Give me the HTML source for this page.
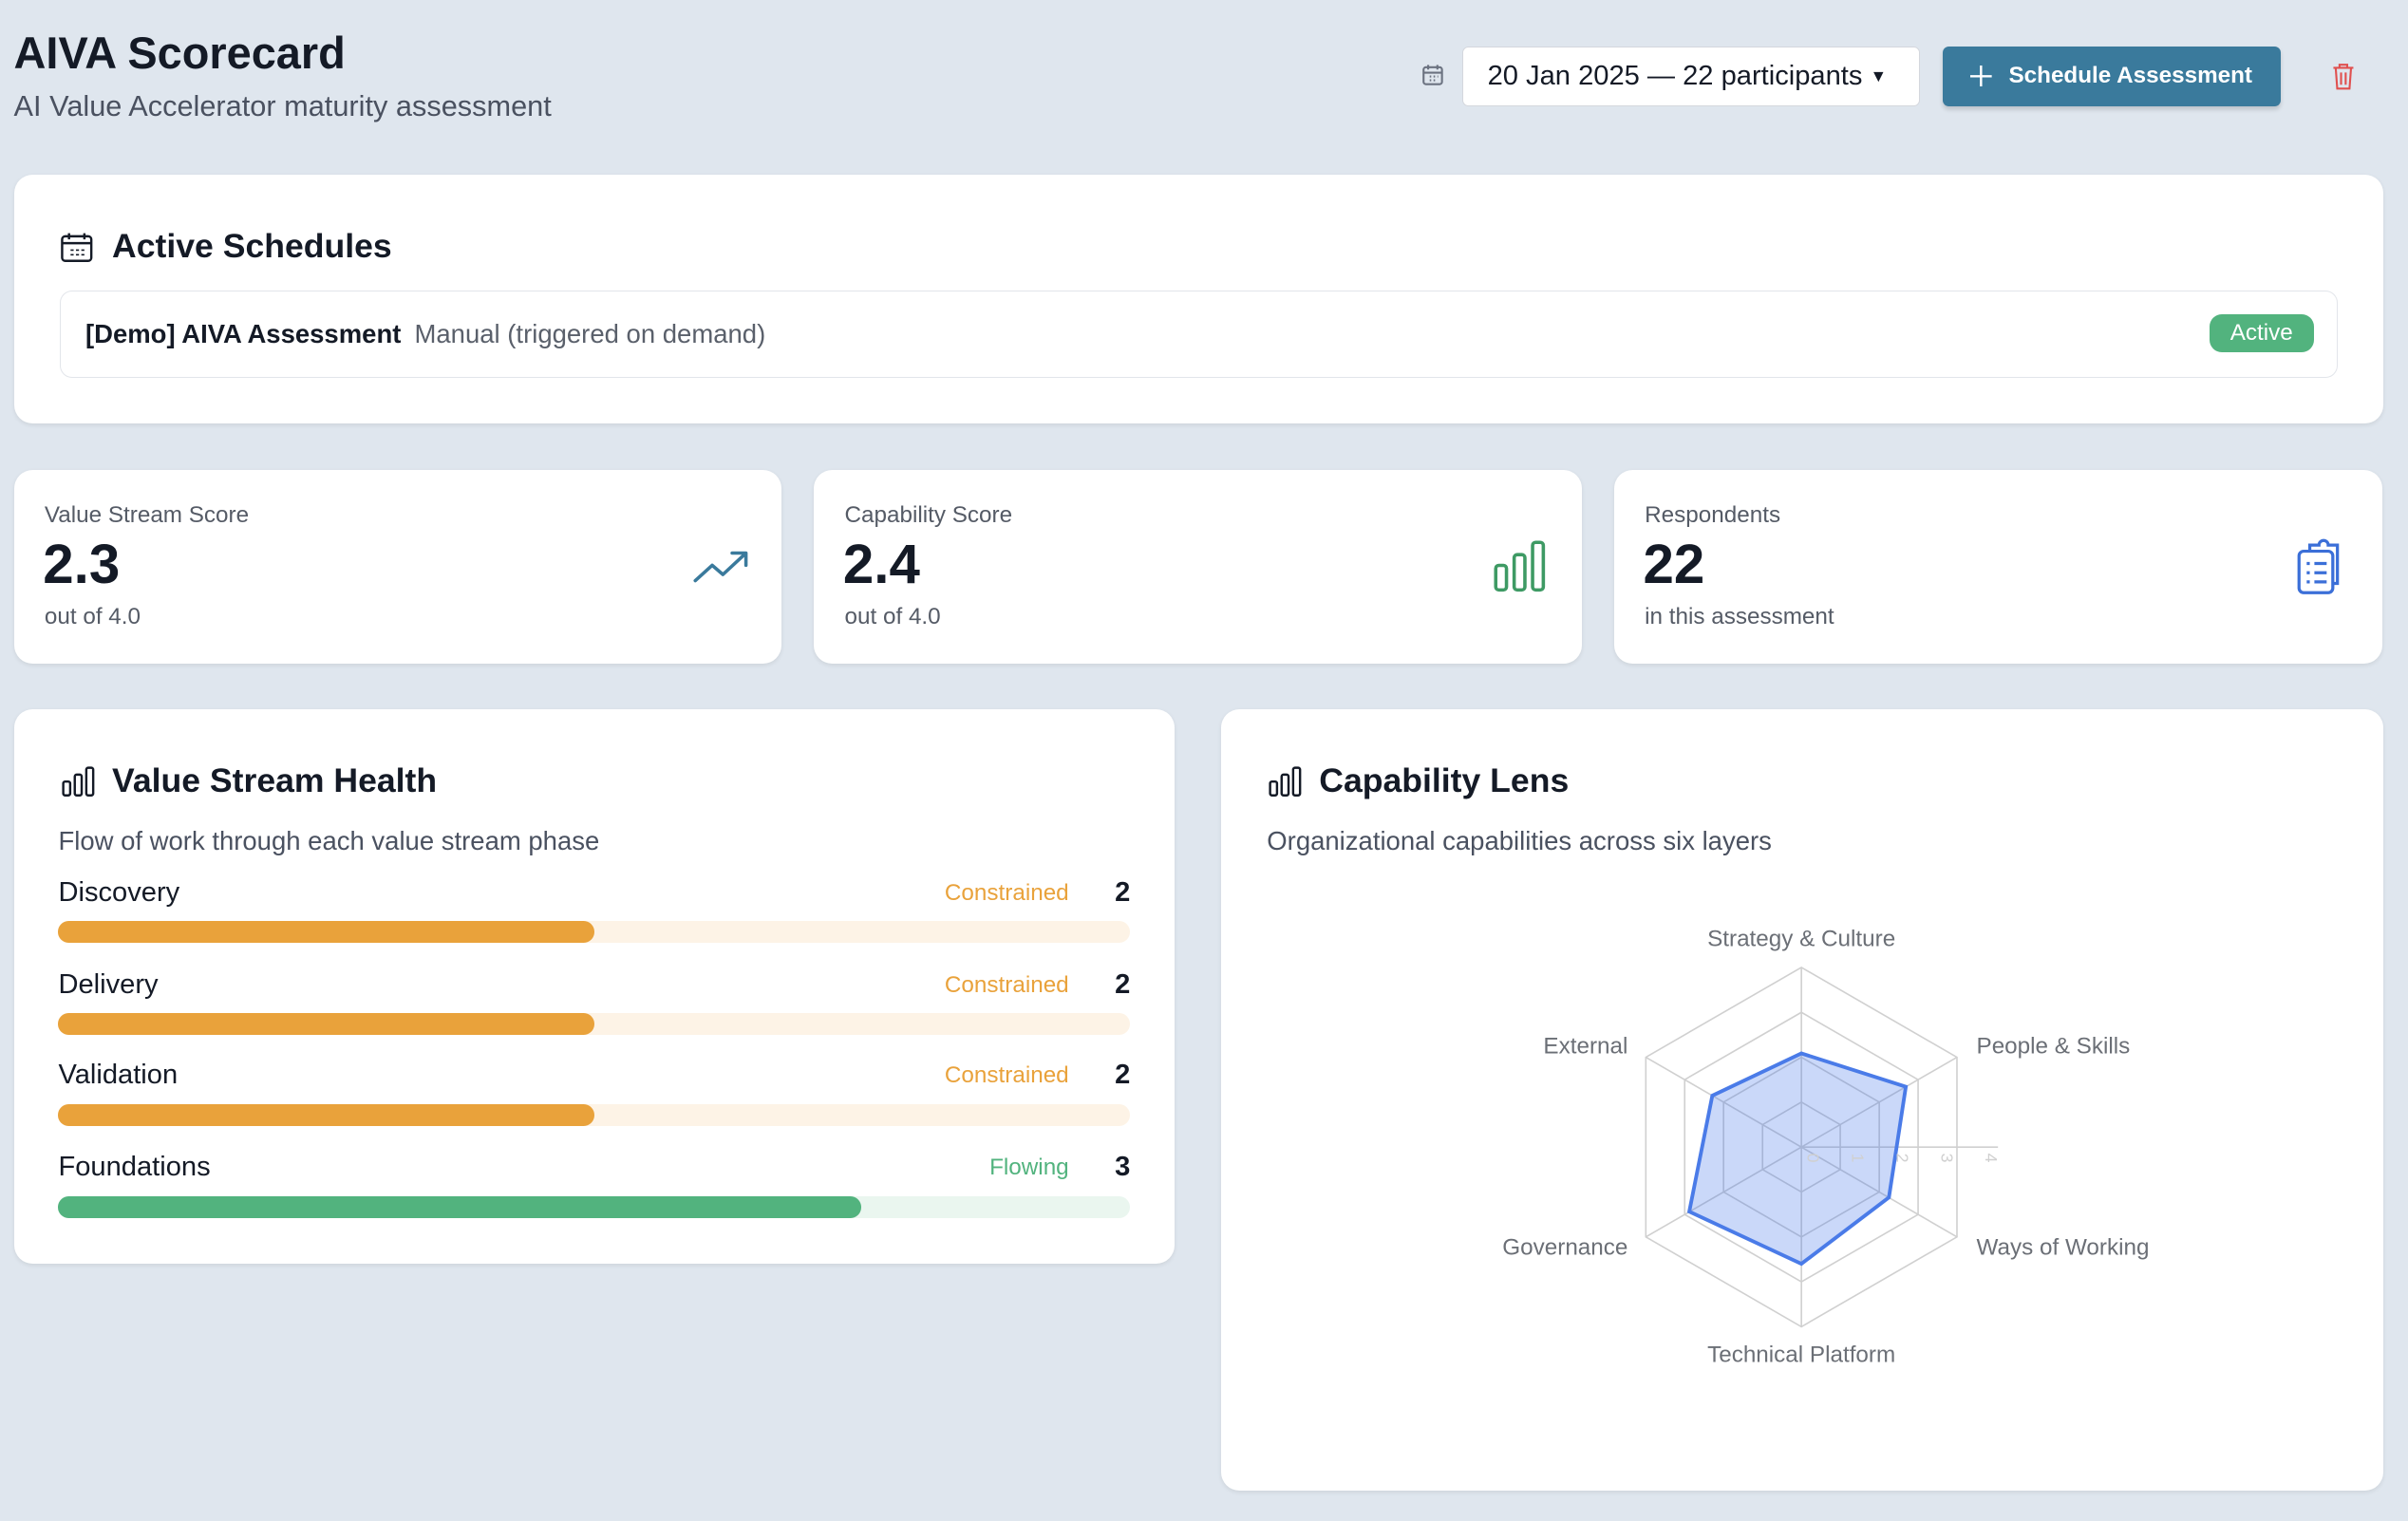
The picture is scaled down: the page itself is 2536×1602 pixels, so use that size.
<!DOCTYPE html>
<html><head><meta charset="utf-8"><style>
*{box-sizing:border-box;margin:0;padding:0}
html,body{width:2536px;height:1602px;overflow:hidden;background:#dfe6ee}
#z{zoom:1.61735;width:1568px;height:991px;position:relative;font-family:"Liberation Sans",sans-serif;color:#141a26}
.a{position:absolute}
.card{position:absolute;background:#fff;border-radius:12px;box-shadow:0 1px 3px rgba(0,0,0,.08)}
.lbl{font-size:15px;color:#555b66}
.val{font-size:36px;font-weight:bold;color:#141a26}
.h{font-size:22px;font-weight:bold}
.row{position:absolute;left:38px;width:698px}
.row .n{position:absolute;left:0;top:-11px;font-size:18px}
.row .s{position:absolute;right:40px;top:-9px;font-size:15px}
.row .v{position:absolute;right:0;top:-11px;font-size:18px;font-weight:bold}
.track{position:absolute;left:0;width:698px;height:14px;border-radius:7px;top:18px}
.fill{height:14px;border-radius:7px}
</style></head><body><div id="z">
<div class="a" style="left:9px;top:18px;font-size:29px;font-weight:bold">AIVA Scorecard</div>
<div class="a" style="left:9px;top:58px;font-size:19px;color:#4a5160">AI Value Accelerator maturity assessment</div>
<svg class="a" style="left:925px;top:41px" width="16" height="16" viewBox="0 0 16 16" fill="none" stroke="#6b7280" stroke-width="1.3"><rect x="2" y="3" width="12" height="11" rx="1.5"/><path d="M2 6.5h12M5 1.5v3M11 1.5v3"/><path d="M6 9h1M8.5 9h1M11 9h.5M6 11.5h1M8.5 11.5h1"/></svg>
<div class="a" style="left:952px;top:30px;width:298px;height:39px;background:#fff;border:1px solid #d4d7dd;border-radius:4px;font-size:18px;padding:9px 0 0 16px">20 Jan 2025 — 22 participants <span style="font-size:11px;position:relative;top:-2px">▼</span></div>
<div class="a" style="left:1265px;top:30px;width:220px;height:39px;background:#3a7a9c;border-radius:4px;color:#fff;font-size:15px;font-weight:bold;display:flex;align-items:center;padding-left:18px;box-shadow:0 2px 3px rgba(0,0,0,.15)"><svg width="14" height="14" viewBox="0 0 14 14" style="margin-right:11px" stroke="#fff" stroke-width="1.5"><path d="M7 0v14M0 7h14"/></svg>Schedule Assessment</div>
<svg class="a" style="left:1518px;top:40px" width="16" height="19" viewBox="0 0 16 19" fill="none" stroke="#e0504f" stroke-width="1.3"><path d="M1.5 4h13M5.5 4V2h5v2M3 4l1 13.5h8L13 4M6.5 7v8M9.5 7v8"/></svg>

<div class="card" style="left:9px;top:114px;width:1543px;height:162px">
<svg class="a" style="left:30px;top:37px" width="22" height="20" viewBox="0 0 22 20" fill="none" stroke="#141a26" stroke-width="1.5"><rect x="1.5" y="3" width="19" height="16" rx="2"/><path d="M1.5 7.5h19M6 1v4M16 1v4"/><path d="M7 12h2M10.5 12h2M14 12h2M7 15h2M10.5 15h2M14 15h2" stroke-width="1"/></svg>
<div class="a h" style="left:64px;top:34px">Active Schedules</div>
<div class="a" style="left:30px;top:75px;width:1483px;height:57px;border:1px solid #e2e5ea;border-radius:8px">
<div class="a" style="left:16px;top:18px;font-size:17px"><b>[Demo] AIVA Assessment</b> <span style="color:#5a606b;margin-left:4px">Manual (triggered on demand)</span></div>
<div class="a" style="left:1399px;top:15px;width:68px;height:25px;background:#52b37e;border-radius:8px;color:#fff;font-size:15px;text-align:center;line-height:25px">Active</div>
</div></div>

<div class="card" style="left:9px;top:306px;width:500px;height:126px">
<div class="a lbl" style="left:20px;top:21px">Value Stream Score</div>
<div class="a val" style="left:19px;top:41px">2.3</div>
<div class="a lbl" style="left:20px;top:87px">out of 4.0</div>
<svg class="a" style="left:442px;top:50px" width="38" height="26" viewBox="0 0 38 26" fill="none" stroke="#3a7a9c" stroke-width="2.2" stroke-linecap="round" stroke-linejoin="round"><path d="M2 22l11-10 7 6 14-13M26 4h9v8"/></svg>
</div>
<div class="card" style="left:530px;top:306px;width:500px;height:126px">
<div class="a lbl" style="left:20px;top:21px">Capability Score</div>
<div class="a val" style="left:19px;top:41px">2.4</div>
<div class="a lbl" style="left:20px;top:87px">out of 4.0</div>
<svg class="a" style="left:442px;top:45px" width="36" height="36" viewBox="0 0 36 36" fill="none" stroke="#3e9a64" stroke-width="2.2"><rect x="2" y="17" width="7" height="16" rx="2"/><rect x="14" y="10" width="7" height="23" rx="2"/><rect x="26" y="2" width="7" height="31" rx="2"/></svg>
</div>
<div class="card" style="left:1051px;top:306px;width:500px;height:126px">
<div class="a lbl" style="left:20px;top:21px">Respondents</div>
<div class="a val" style="left:19px;top:41px">22</div>
<div class="a lbl" style="left:20px;top:87px">in this assessment</div>
<svg class="a" style="left:444px;top:44px" width="34" height="38" viewBox="0 0 34 38" fill="none" stroke="#3b6fd8" stroke-width="2"><rect x="2" y="9" width="22" height="27" rx="3"/><path d="M9 9V5h6a3 3 0 0 1 6 0h6v25h-3"/><path d="M7 17h2M12 17h8M7 23h2M12 23h8M7 29h2M12 29h8"/></svg>
</div>

<div class="card" style="left:9px;top:462px;width:756px;height:361px">
<svg class="a" style="left:31px;top:37px" width="22" height="20" viewBox="0 0 22 20" fill="none" stroke="#141a26" stroke-width="1.5"><rect x="1" y="10" width="4.5" height="9" rx="1.2"/><rect x="8.5" y="5.5" width="4.5" height="13.5" rx="1.2"/><rect x="16" y="1" width="4.5" height="18" rx="1.2"/></svg>
<div class="a h" style="left:64px;top:34px">Value Stream Health</div>
<div class="a" style="left:29px;top:76px;font-size:17px;color:#4a5160">Flow of work through each value stream phase</div>
</div>
<div class="row" style="top:582px"><div class="n">Discovery</div><div class="s" style="color:#e9a23b">Constrained</div><div class="v">2</div><div class="track" style="background:#fdf3e6"><div class="fill" style="width:349px;background:#e9a23b"></div></div></div>
<div class="row" style="top:642px"><div class="n">Delivery</div><div class="s" style="color:#e9a23b">Constrained</div><div class="v">2</div><div class="track" style="background:#fdf3e6"><div class="fill" style="width:349px;background:#e9a23b"></div></div></div>
<div class="row" style="top:701px"><div class="n">Validation</div><div class="s" style="color:#e9a23b">Constrained</div><div class="v">2</div><div class="track" style="background:#fdf3e6"><div class="fill" style="width:349px;background:#e9a23b"></div></div></div>
<div class="row" style="top:761px"><div class="n">Foundations</div><div class="s" style="color:#52b37e">Flowing</div><div class="v">3</div><div class="track" style="background:#eaf6ef"><div class="fill" style="width:523px;background:#52b37e"></div></div></div>

<div class="card" style="left:795px;top:462px;width:757px;height:509px">
<svg class="a" style="left:31px;top:37px" width="22" height="20" viewBox="0 0 22 20" fill="none" stroke="#141a26" stroke-width="1.5"><rect x="1" y="10" width="4.5" height="9" rx="1.2"/><rect x="8.5" y="5.5" width="4.5" height="13.5" rx="1.2"/><rect x="16" y="1" width="4.5" height="18" rx="1.2"/></svg>
<div class="a h" style="left:64px;top:34px">Capability Lens</div>
<div class="a" style="left:30px;top:76px;font-size:17px;color:#4a5160">Organizational capabilities across six layers</div>
</div>
<svg class="a" style="left:0;top:0" width="1568" height="991" font-family="Liberation Sans, sans-serif">
<g transform="translate(1173,747)" fill="none" stroke="#d0d0d0" stroke-width="1">
<polygon points="0,-117 101.3,-58.5 101.3,58.5 0,117 -101.3,58.5 -101.3,-58.5"/>
<polygon points="0,-87.75 76,-43.9 76,43.9 0,87.75 -76,43.9 -76,-43.9"/>
<polygon points="0,-58.5 50.7,-29.25 50.7,29.25 0,58.5 -50.7,29.25 -50.7,-29.25"/>
<polygon points="0,-29.25 25.3,-14.6 25.3,14.6 0,29.25 -25.3,14.6 -25.3,-14.6"/>
<path d="M0,-117V117M-101.3,-58.5L101.3,58.5M101.3,-58.5L-101.3,58.5M0,0H128"/>
<polygon points="0,-61 68,-39.3 57,32.8 0,76 -73,42 -58,-33.5" fill="rgba(59,111,232,.27)" stroke="#4a7be8" stroke-width="2.4"/>
<g fill="#d0d0d0" stroke="none" font-size="11"><text x="4" y="4" transform="rotate(90 4 4)">0</text><text x="33" y="4" transform="rotate(90 33 4)">1</text><text x="62" y="4" transform="rotate(90 62 4)">2</text><text x="91" y="4" transform="rotate(90 91 4)">3</text><text x="120" y="4" transform="rotate(90 120 4)">4</text></g>
</g>
<g fill="#6b6f76" font-size="15">
<text x="1173" y="616" text-anchor="middle">Strategy &amp; Culture</text>
<text x="1287" y="686">People &amp; Skills</text>
<text x="1287" y="817">Ways of Working</text>
<text x="1173" y="887" text-anchor="middle">Technical Platform</text>
<text x="1060" y="817" text-anchor="end">Governance</text>
<text x="1060" y="686" text-anchor="end">External</text>
</g></svg>
</div></body></html>
